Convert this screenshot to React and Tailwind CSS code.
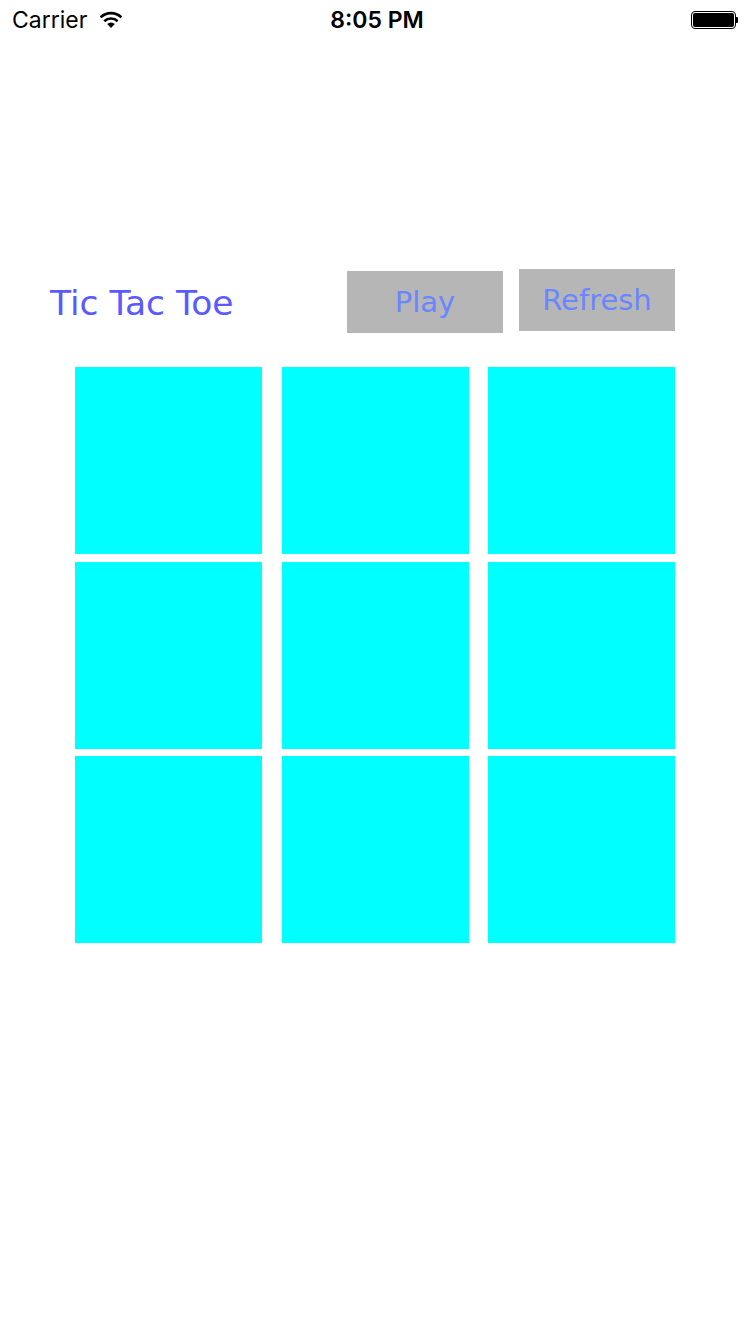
export default function App() {
  const cells = Array.from({ length: 9 });

  return (
    <div className="w-[750px] h-[1334px] bg-white relative overflow-hidden">
      {/* status bar */}
      <div className="h-[40px] flex items-center px-[12px] text-black font-['Inter',sans-serif]">
        <div className="flex items-center gap-[11px] w-[250px]">
          <span className="text-[23px] leading-none">Carrier</span>
          <svg width="26" height="18" viewBox="0 0 26 18">
            <path d="M13 17 L9.2 13 A5.5 5.5 0 0 1 16.8 13 Z" fill="#000" />
            <path d="M6.3 10.2 A9.6 9.6 0 0 1 19.7 10.2" stroke="#000" strokeWidth="2.6" fill="none" />
            <path d="M2.6 6.4 A14.8 14.8 0 0 1 23.4 6.4" stroke="#000" strokeWidth="2.6" fill="none" />
          </svg>
        </div>
        <div className="flex-1 flex justify-center">
          <span className="text-[23px] font-semibold leading-none whitespace-nowrap ml-[4px]">8:05 PM</span>
        </div>
        <div className="w-[250px] flex justify-end items-center">
          <div className="w-[45px] h-[18px] rounded-[4px] border border-black p-[1px]">
            <div className="w-full h-full bg-black rounded-[2px]" />
          </div>
          <div className="w-[2px] h-[6px] bg-black rounded-r-[1px]" />
        </div>
      </div>

      {/* header row */}
      <div className="mt-[229px] flex items-start pl-[50px] font-['DejaVu_Sans',sans-serif]">
        <div className="mt-[14px] text-[34.5px] leading-[40px] text-[#5a5aff]">Tic Tac Toe</div>
        <div className="ml-auto mr-[75px] flex items-start gap-[16px]">
          <button className="mt-[2px] w-[156px] h-[62px] bg-[#b6b6b6] text-[#6a86ff] text-[29px] leading-none flex items-center justify-center">
            Play
          </button>
          <button className="w-[156px] h-[62px] bg-[#b6b6b6] text-[#6a86ff] text-[29px] leading-none flex items-center justify-center">
            Refresh
          </button>
        </div>
      </div>

      {/* board */}
      <div className="mt-[34px] ml-[75px] grid grid-cols-[187px_187px_187px] grid-rows-[187px_187px_187px] gap-x-[19.5px] gap-y-[7.5px] w-[600px]">
        {cells.map((_, i) => (
          <div key={i} className="bg-[#00ffff]" />
        ))}
      </div>
    </div>
  );
}
